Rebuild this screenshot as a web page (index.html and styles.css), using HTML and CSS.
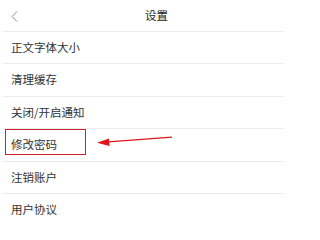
FILE: index.html
```html
<!DOCTYPE html>
<html lang="zh">
<head>
<meta charset="utf-8">
<link rel="stylesheet" href="styles.css">
</head>
<body>
<div class="page">
  <div class="header">
    <svg class="back" width="7" height="11" viewBox="0 0 7 11"><path d="M6 0.5 L1 5.5 L6 10.5" fill="none" stroke="#8a8a8a" stroke-width="1"/></svg>
    <span class="title">设置</span>
  </div>
  <ul class="list">
    <li class="row">正文字体大小</li>
    <li class="row">清理缓存</li>
    <li class="row">关闭/开启通知</li>
    <li class="row">修改密码</li>
    <li class="row">注销账户</li>
    <li class="row">用户协议</li>
  </ul>
  <div class="highlight"></div>
  <svg class="arrow" width="80" height="12" viewBox="0 0 80 12">
    <path d="M8 6.2 L75 1.2" stroke="#e0161c" stroke-width="1.3" fill="none"/>
    <polygon points="0,6.8 12,2.5 12.5,10" fill="#e0161c"/>
  </svg>
</div>
</body>
</html>
```
FILE: styles.css
```css
html, body {
  margin: 0;
  padding: 0;
  background: #ffffff;
}
.page {
  position: relative;
  width: 284px;
  height: 219px;
  overflow: hidden;
  font-family: "Noto Sans CJK SC", "Noto Sans", sans-serif;
  color: #333333;
}
.header {
  display: flex;
  align-items: center;
  height: 31px;
  margin-left: 3px;
  padding-left: 8px;
  border-bottom: 1px solid #ececec;
}
.back {
  display: block;
  margin-top: 2px;
}
.title {
  margin-left: 127px;
  font-size: 11.5px;
  color: #222222;
  line-height: 1;
}
.list {
  list-style: none;
  margin: 0 0 0 3px;
  padding: 0;
}
.row {
  box-sizing: border-box;
  height: 32.4px;
  padding-left: 8px;
  display: flex;
  align-items: center;
  font-size: 11.5px;
  line-height: 1;
  border-bottom: 1px solid #ececec;
  color: #333333;
}
.highlight {
  position: absolute;
  left: 5px;
  top: 129px;
  width: 81px;
  height: 26px;
  box-sizing: border-box;
  border: 1.5px solid #c8242a;
}
.arrow {
  position: absolute;
  left: 97px;
  top: 136px;
}
```
